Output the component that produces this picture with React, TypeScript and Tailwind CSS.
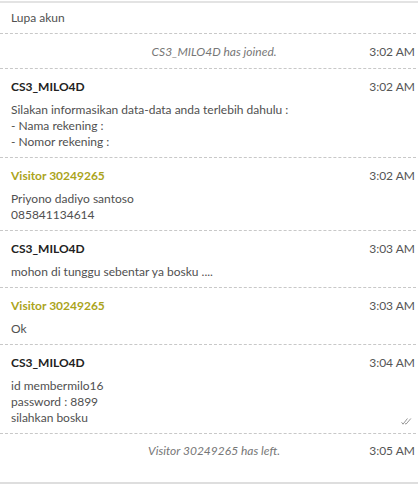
import React from "react";

type Msg =
  | { kind: "sys"; text: string; time: string }
  | { kind: "msg"; who: "cs" | "visitor"; name: string; time: string; lines: string[]; check?: boolean };

const items: Msg[] = [
  { kind: "sys", text: "CS3_MILO4D has joined.", time: "3:02 AM" },
  {
    kind: "msg",
    who: "cs",
    name: "CS3_MILO4D",
    time: "3:02 AM",
    lines: ["Silakan informasikan data-data anda terlebih dahulu :", "- Nama rekening :", "- Nomor rekening :"],
  },
  { kind: "msg", who: "visitor", name: "Visitor 30249265", time: "3:02 AM", lines: ["Priyono dadiyo santoso", "085841134614"] },
  { kind: "msg", who: "cs", name: "CS3_MILO4D", time: "3:03 AM", lines: ["mohon di tunggu sebentar ya bosku ...."] },
  { kind: "msg", who: "visitor", name: "Visitor 30249265", time: "3:03 AM", lines: ["Ok"] },
  {
    kind: "msg",
    who: "cs",
    name: "CS3_MILO4D",
    time: "3:04 AM",
    lines: ["id membermilo16", "password : 8899", "silahkan bosku"],
    check: true,
  },
];

function Check() {
  return (
    <svg width="11" height="7" viewBox="0 0 11 7" fill="none" stroke="#8a8a8a" strokeWidth="0.9" strokeLinecap="round">
      <path d="M0.8 4.6 L2 6.2 L6.2 0.8" />
      <path d="M4.4 5.6 L5 6.2 L9.6 0.8" />
    </svg>
  );
}

export default function App() {
  return (
    <div
      className="w-[418px] h-[485px] bg-white text-[12px] text-[#505050]"
      style={{ fontFamily: "Lato, 'Open Sans', sans-serif" }}
    >
      <div className="mt-px border-t-2 border-[#e3e3e3]" />
      <div className="mr-[2px] border-b border-dashed border-[#c8c8c8] pl-[11px] pt-[7px] pb-[7px] leading-[16px]">
        Lupa akun
      </div>
      {items.map((it, i) =>
        it.kind === "sys" ? (
          <div
            key={i}
            className="mr-[2px] border-b border-dashed border-[#c8c8c8] pt-[10px] pb-[8px] pl-[11px] pr-px flex leading-[16px]"
          >
            <div className="flex-1 text-center italic text-[#777] pl-[48px]">{it.text}</div>
            <div className="text-[#555]">{it.time}</div>
          </div>
        ) : (
          <div key={i} className="mr-[2px] border-b border-dashed border-[#c8c8c8] pt-[10px] pb-[7px] pl-[11px] pr-px">
            <div className="flex justify-between leading-[16px]">
              <span className={it.who === "cs" ? "font-bold text-[#222]" : "font-bold text-[#aba41c]"}>{it.name}</span>
              <span className="text-[#555]">{it.time}</span>
            </div>
            <div className="mt-[7px] flex justify-between items-end leading-[16px]">
              <div>
                {it.lines.map((l, j) => (
                  <div key={j}>{l}</div>
                ))}
              </div>
              {it.check && (
                <div className="mb-[1px] mr-[3px]">
                  <Check />
                </div>
              )}
            </div>
          </div>
        )
      )}
      <div className="mr-[2px] pt-[9px] pb-[8px] pl-[11px] pr-px flex leading-[16px]">
        <div className="flex-1 text-center italic text-[#777] pl-[48px]">Visitor 30249265 has left.</div>
        <div className="text-[#555]">3:05 AM</div>
      </div>
      <div className="h-[15px]" />
      <div className="border-t-2 border-[#dedede]" />
    </div>
  );
}
